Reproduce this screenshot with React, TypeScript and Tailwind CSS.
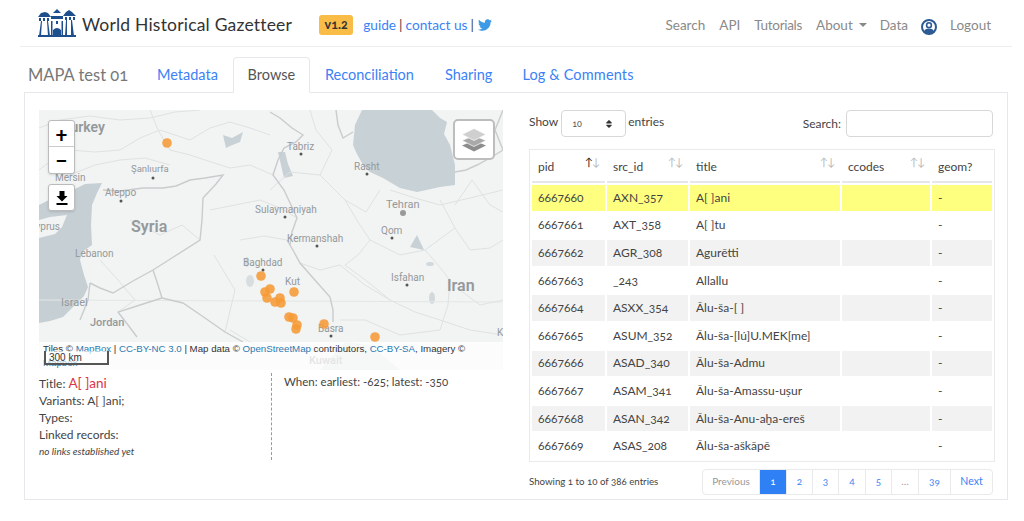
import React from "react";
import { FaTwitter, FaSort } from "react-icons/fa";

const rows = [
  ["6667660", "AXN_357", "A[ ]ani"],
  ["6667661", "AXT_358", "A[ ]tu"],
  ["6667662", "AGR_308", "Agurētti"],
  ["6667663", "_243", "Allallu"],
  ["6667664", "ASXX_354", "Ālu-ša-[ ]"],
  ["6667665", "ASUM_352", "Ālu-ša-[lú]U.MEK[me]"],
  ["6667666", "ASAD_340", "Ālu-ša-Admu"],
  ["6667667", "ASAM_341", "Ālu-ša-Amassu-uṣur"],
  ["6667668", "ASAN_342", "Ālu-ša-Anu-aḫa-ereš"],
  ["6667669", "ASAS_208", "Ālu-ša-aškāpē"],
];

const dots = [
  [167, 143], [261, 276], [270, 289], [265, 292], [267, 298], [280, 298], [275, 302], [281, 303],
  [294, 292], [289, 317], [293, 318], [297, 325], [296, 329], [324, 324], [375, 337],
];

const labels: [string, number, number, number, number?][] = [
  ["Turkey", 105, 132, 14, 600],
  ["Şanlıurfa", 131, 172, 9.5],
  ["Mersin", 55, 181, 10],
  ["Aleppo", 105, 196, 10],
  ["Syria", 131, 232, 16, 600],
  ["Cyprus", 60, 230, 10],
  ["Lebanon", 75, 257, 10],
  ["Israel", 61, 306, 11],
  ["Jordan", 90, 326, 11, 500],
  ["Tabriz", 287, 150, 10],
  ["Rasht", 354, 170, 10],
  ["Tehran", 386, 208, 11],
  ["Sulaymaniyah", 255, 213, 10],
  ["Kermanshah", 287, 242, 10],
  ["Qom", 381, 234, 10],
  ["Baghdad", 243, 266, 10],
  ["Isfahan", 391, 281, 10],
  ["Kut", 285, 285, 10],
  ["Iran", 447, 291, 16, 600],
  ["Basra", 318, 332, 10],
  ["Kuwait", 309, 364, 11, 600],
  ["K", 497, 336, 10],
];

const cities = [[153, 178], [121, 201], [301, 154], [367, 174], [285, 217], [317, 246], [392, 238], [263, 270], [407, 285], [331, 336]];

const majorBorders = [
  "103,190 120,191 143,188 163,188 176,186 190,180 205,178 223,175 216,184 203,198 202,220 200,240 175,256 153,270 133,281 113,293 100,288 90,283",
  "153,270 158,285 162,298 140,305 118,312 128,325 137,337",
  "162,298 183,303 205,318 225,332 243,342",
  "270,112 280,118 292,128 303,135 296,142 284,148 278,160 273,175 284,190 297,218 292,232 290,245 287,240 294,252 300,263 314,279 330,297 333,310 333,322",
  "336,110 338,125 343,138 353,132",
  "455,172 466,170 477,165 490,158 503,150",
  "90,283 88,300 80,320",
  "503,110 495,130 503,150",
];
const minorBorders = [
  "39,128 60,120 90,116 120,120 150,118 175,112 200,110",
  "120,150 140,138 160,130 190,140 210,128 230,122 250,128 270,135",
  "150,110 158,130 170,150 190,155 205,160 230,168 250,165 273,175",
  "70,175 95,165 120,160 145,158 170,165",
  "210,210 235,205 260,200 280,208 297,218",
  "240,240 264,236 287,240",
  "300,263 320,270 340,265 365,285 390,300 415,312 440,320 470,330 503,335",
  "345,200 358,222 370,240 358,255 345,265 368,282 390,300",
  "440,200 455,228 470,250 490,248 503,240",
  "425,250 438,265 450,280 448,305 440,330",
  "390,190 415,198 440,205 470,198 503,190",
  "100,260 118,280 135,300 118,312",
  "230,330 255,345",
  "39,170 55,158 70,150 95,152 120,150",
  "310,110 316,130 332,150 320,175 345,200",
  "380,190 366,212 345,200",
  "455,205 472,180 490,205 503,212",
  "370,240 400,255 425,250 455,228",
  "130,220 160,235 182,225 200,240",
  "340,320 365,320 400,335 440,330",
  "460,290 480,305 503,300",
  "214,255 235,290 225,332",
  "270,190 290,172 320,175",
];

function MapArt() {
  return (
    <svg viewBox="39 110 464 260" className="absolute inset-0 h-full w-full">
      <rect x="39" y="110" width="464" height="260" fill="#f2f3f3" />
      <polygon points="362,110 432,110 440,118 447,122 444,134 450,145 455,165 455,185 440,187 417,192 400,188 383,178 370,172 363,165 356,152 353,145 355,125" fill="#c8d1d6" />
      <polygon points="39,205 55,197 73,190 85,184 102,183 97,193 92,205 91,225 92,245 82,252 80,260 84,275 88,287 84,296 77,303 63,317 50,321 39,323" fill="#c6cfd4" />
      <polygon points="39,220 50,217 67,215 62,227 55,234 39,238" fill="#f2f3f3" />
      <polygon points="223,135 232,138 243,132 240,142 230,146 226,148" fill="#c8d1d6" />
      <polygon points="278,152 285,152 288,164 293,176 284,178 281,165" fill="#c8d1d6" />
      <polygon points="410,247 417,235 424,250" fill="#c8d1d6" />
      <polygon points="345,342 370,345 400,370 320,370" fill="#dce1e3" />
      <ellipse cx="430" cy="264" rx="4" ry="2" fill="#d2d9dc" />
      <ellipse cx="432" cy="298" rx="3" ry="6" fill="#d2d9dc" />
      <ellipse cx="250" cy="281" rx="4" ry="6" fill="#d8dee0" />
      <ellipse cx="247" cy="262" rx="2" ry="5" fill="#d8dee0" />
      <polyline points="39,300 503,302" fill="none" stroke="#e4e6e6" strokeWidth="1" />
      {minorBorders.map((p) => (
        <polyline key={p} points={p} fill="none" stroke="#e0e2e2" strokeWidth="1" />
      ))}
      {majorBorders.map((p) => (
        <polyline key={p} points={p} fill="none" stroke="#c9cccd" strokeWidth="1.4" />
      ))}
      {cities.map(([x, y]) => (
        <circle key={x} cx={x} cy={y} r="1.5" fill="#555" />
      ))}
      <circle cx="403" cy="213" r="3" fill="#999" />
      {labels.map(([t, x, y, s, w]) => (
        <text key={t} x={x} y={y} fontSize={s} fontWeight={w ?? 400} fill="#94999b" textAnchor={t === "Turkey" || t === "Cyprus" ? "end" : "start"} fontFamily="Roboto, sans-serif">
          {t}
        </text>
      ))}
      {dots.map(([x, y]) => (
        <circle key={`${x}-${y}`} cx={x} cy={y} r="4.8" fill="#f59a35" fillOpacity="0.88" />
      ))}
    </svg>
  );
}

function Logo() {
  return (
    <svg viewBox="0 0 38 28" className="h-[28px] w-[38px] shrink-0">
      <g fill="#1d4f8c">
        <path d="M0 8 L3 4 L7 3 L10 4 L13 8 Z" />
        <path d="M15 4 L19 0 L23 4 Z" />
        <path d="M25 7 L28 3 L31 1 L34 3 L38 7 Z" />
        <path d="M13 7 H25 V10 H13 Z" />
        <rect x="1" y="9" width="2" height="3" />
        <rect x="5" y="9" width="2" height="3" />
        <rect x="9" y="9" width="2" height="3" />
        <rect x="27" y="8" width="2" height="3" />
        <rect x="31" y="8" width="2" height="3" />
        <rect x="35" y="8" width="2" height="3" />
        <path d="M1 27 L3 12 H4 L3 27 Z M9 12 H10 L12 27 H10 Z" />
        <path d="M27 27 L28 11 H29 L29 27 Z M33 11 H34 L36 27 H33 Z" />
        <rect x="0" y="26" width="38" height="2" />
        <path d="M15 28 V21 Q19 17 23 21 V28 Z" />
        <rect x="13" y="12" width="1.5" height="14" />
        <rect x="23.5" y="12" width="1.5" height="14" />
        <rect x="18" y="12" width="2" height="3" />
      </g>
    </svg>
  );
}

function UserIcon() {
  return (
    <svg viewBox="0 0 16 16" className="ml-[13px] mt-[3px] h-[16px] w-[16px] shrink-0">
      <circle cx="8" cy="8" r="7" fill="#fff" stroke="#2c5a94" strokeWidth="2" />
      <circle cx="8" cy="6.2" r="2.4" fill="#fff" stroke="#2c5a94" strokeWidth="1.6" />
      <path d="M3 13 C3.5 10.2 5.5 9.8 8 9.8 C10.5 9.8 12.5 10.2 13 13 L8 15.4 Z" fill="#2c5a94" />
    </svg>
  );
}

function SortMark({ active }: { active?: boolean }) {
  return (
    <span className="absolute right-[5px] top-[4px] flex text-[11px] leading-none">
      <span className={active ? "text-[#222]" : "text-[#bbbbbb]"}>↑</span>
      <span className="ml-[-1px] text-[#bbbbbb]">↓</span>
    </span>
  );
}

export default function App() {
  const pages = [
    ["Previous", "w-[57px] text-[#999] rounded-l-[4px] text-[10px]"],
    ["1", "w-[27px] bg-[#2f7ff5] text-white"],
    ["2", "w-[26px] text-[#3b82f6]"],
    ["3", "w-[26px] text-[#3b82f6]"],
    ["4", "w-[27px] text-[#3b82f6]"],
    ["5", "w-[26px] text-[#3b82f6]"],
    ["…", "w-[27px] text-[#999]"],
    ["39", "w-[32px] text-[#3b82f6]"],
    ["Next", "w-[41px] text-[#3b82f6] rounded-r-[4px] text-[10.5px]"],
  ];
  const cols = ["w-[73px]", "w-[81px]", "w-[150px]", "w-[88px]", "w-[60px]"];
  return (
    <div className="h-[521px] w-[1024px] overflow-hidden bg-white font-['Lato','Open_Sans',sans-serif] text-[#444] oldstyle-nums">
      <header className="ml-[20px] flex h-[47px] w-[992px] items-center border-b border-[#eeeeee] pl-[18px] pt-[4px]">
        <div className="mb-[4px]"><Logo /></div>
        <span className="ml-[6px] text-[17.5px] tracking-[0.2px] text-[#333]">World Historical Gazetteer</span>
        <span className="ml-[27px] flex h-[20px] w-[34px] items-center justify-center rounded-[3px] bg-[#f9bd47] text-[12.5px] font-bold text-[#333]">v1.2</span>
        <span className="ml-[10px] text-[13.7px] text-[#3b82f6]">guide</span>
        <span className="ml-[3px] text-[13.7px] text-[#444]">|</span>
        <span className="ml-[3px] text-[13.7px] text-[#3b82f6]">contact us</span>
        <span className="ml-[3px] text-[13.7px] text-[#444]">|</span>
        <FaTwitter className="ml-[4px] text-[14px] text-[#3f9ae5]" />
        <nav className="ml-auto flex items-center pr-[21px] text-[13.5px] text-[#8a8a8a]">
          <span>Search</span>
          <span className="ml-[14px]">API</span>
          <span className="ml-[14px] tracking-[-0.3px]">Tutorials</span>
          <span className="ml-[14px]">About</span>
          <span className="ml-[6px] h-0 w-0 border-x-[4px] border-t-[4px] border-x-transparent border-t-[#888]" />
          <span className="ml-[13px]">Data</span>
          <UserIcon />
          <span className="ml-[13px]">Logout</span>
        </nav>
      </header>

      <div className="ml-[28px] mt-[10px] flex h-[35px] items-stretch">
        <span className="mt-[6px] w-[117px] text-[16.5px] text-[#777]">MAPA test 01</span>
        <span className="ml-[12px] mr-[15px] mt-[7px] text-[14.5px] text-[#3b82f6]">Metadata</span>
        <span className="z-10 mb-[-1px] flex w-[77px] items-center justify-center rounded-t-[4px] border border-b-white border-[#e6e8eb] bg-white text-[14.5px] text-[#555]">Browse</span>
        <span className="ml-[15px] mt-[7px] text-[14.5px] text-[#3b82f6]">Reconciliation</span>
        <span className="ml-[31px] mt-[7px] text-[14.5px] text-[#3b82f6]">Sharing</span>
        <span className="ml-[30px] mt-[7px] text-[14.5px] tracking-[0.15px] text-[#3b82f6]">Log &amp; Comments</span>
      </div>

      <main className="ml-[24px] flex h-[408px] w-[984px] border border-[#e6e8eb] pl-[14px] pt-[17px]">
        <section className="w-[465px]">
          <div className="relative h-[260px] w-[464px] overflow-hidden bg-[#f2f3f3]">
            <MapArt />
            <div className="absolute left-[9px] top-[10px] flex w-[27px] flex-col overflow-hidden rounded-[3px] border border-[#bbb] bg-white text-black shadow-sm">
              <span className="flex h-[26px] items-center justify-center border-b border-[#ccc] text-[22px] font-bold leading-none">+</span>
              <span className="flex h-[26px] items-center justify-center text-[22px] font-bold leading-none">−</span>
            </div>
            <div className="absolute left-[9px] top-[74px] flex h-[27px] w-[27px] items-center justify-center rounded-[3px] border border-[#bbb] bg-white shadow-sm">
              <svg viewBox="0 0 16 16" className="h-[16px] w-[16px]">
                <path d="M5.5 1 H10.5 V6 H13.5 L8 11.5 L2.5 6 H5.5 Z M2.5 13 H13.5 V15 H2.5 Z" fill="#000" />
              </svg>
            </div>
            <div className="absolute left-[414px] top-[9px] flex h-[41px] w-[42px] items-center justify-center rounded-[5px] border-2 border-[#bdbdbd] bg-white">
              <svg viewBox="0 0 26 24" className="h-[25px] w-[26px]">
                <path d="M13 13 L25 18 L13 24 L1 18 Z" fill="#8d8d8d" />
                <path d="M13 8 L25 13 L13 19 L1 13 Z" fill="#a9a9a9" stroke="#fff" strokeWidth="0.7" />
                <path d="M13 1 L25 7 L13 13 L1 7 Z" fill="#cfcfcf" stroke="#fff" strokeWidth="0.7" />
              </svg>
            </div>
            <div className="absolute bottom-0 left-0 h-[28px] w-full bg-white/75 pl-[4px] font-['Liberation_Sans',sans-serif] text-[9.7px] leading-[14px] text-[#333]">
              Tiles © <span className="text-[#2a7ab0]">MapBox</span> | <span className="text-[#2a7ab0]">CC-BY-NC 3.0</span> | Map data © <span className="text-[#2a7ab0]">OpenStreetMap</span> contributors, <span className="text-[#2a7ab0]">CC-BY-SA</span>, Imagery ©
              <br />
              <span className="text-[#2a7ab0]">Mapbox</span>
            </div>
            <div className="absolute bottom-[5px] left-[5px] h-[14px] w-[65px] border-2 border-t-0 border-[#555] bg-white/60 pl-[3px] font-['Liberation_Sans',sans-serif] text-[10px] leading-[13px] text-[#333]">300 km</div>
          </div>
          <div className="mt-[3px] flex">
            <div className="h-[87px] w-[232px] text-[12px] leading-[16.8px]">
              <div className="flex items-baseline">Title:&nbsp;<span className="text-[13.5px] leading-[20px] text-[#dc3545]">A[ ]ani</span></div>
              <div>Variants: A[ ]ani;</div>
              <div>Types:</div>
              <div>Linked records:</div>
              <div className="text-[10px] italic">no links established yet</div>
            </div>
            <div className="h-[87px] border-l border-dashed border-[#999] pl-[12px] pt-[0px] text-[11.5px]">When: earliest: -625; latest: -350</div>
          </div>
        </section>

        <section className="ml-[25px] w-[464px]">
          <div className="flex h-[27px] items-center text-[12px]">
            <span className="mb-[3px]">Show</span>
            <span className="ml-[3px] flex h-[27px] w-[65px] items-center justify-between rounded-[4px] border border-[#d8d8d8] pl-[10px] pr-[11px] text-[9px] text-[#555]">
              10
              <FaSort className="text-[10px] text-[#333]" />
            </span>
            <span className="mb-[3px] ml-[2px]">entries</span>
            <span className="ml-auto">Search:</span>
            <span className="ml-[5px] h-[27px] w-[147px] rounded-[4px] border border-[#d8d8d8]" />
          </div>
          <table className="mt-[12px] w-[464px] table-fixed border-separate border-spacing-[2px] border border-[#e8eaec] text-[12px] text-[#444]">
            <colgroup>
              {cols.map((c) => (
                <col key={c} className={c} />
              ))}
            </colgroup>
            <thead>
              <tr>
                {["pid", "src_id", "title", "ccodes", "geom?"].map((h, i) => (
                  <th key={h} className="relative h-[31px] border-b-2 border-[#e4e6e9] px-[6px] text-left font-normal">
                    {h}
                    {i < 4 && <SortMark active={i === 0} />}
                  </th>
                ))}
              </tr>
            </thead>
            <tbody>
              {rows.map((r, i) => {
                const bg = i === 0 ? "bg-[#ffff7f]" : i % 2 === 0 ? "bg-[#f2f2f2]" : "bg-white";
                const cell = `h-[25.6px] p-0 px-[6px] ${bg}`;
                return (
                  <tr key={r[0]}>
                    <td className={cell}>{r[0]}</td>
                    <td className={cell}>{r[1]}</td>
                    <td className={cell}>{r[2]}</td>
                    <td className={cell}></td>
                    <td className={cell}>-</td>
                  </tr>
                );
              })}
            </tbody>
          </table>
          <div className="mt-[7px] flex items-start">
            <span className="mt-[5px] text-[9.7px] text-[#444]">Showing 1 to 10 of 386 entries</span>
            <div className="ml-auto flex h-[26px] rounded-[4px] border border-[#e8eaec] text-[10px]">
              {pages.map(([t, c]) => (
                <span key={t} className={`flex items-center justify-center border-r border-[#e8eaec] last:border-r-0 ${c}`}>{t}</span>
              ))}
            </div>
          </div>
        </section>
      </main>
    </div>
  );
}
